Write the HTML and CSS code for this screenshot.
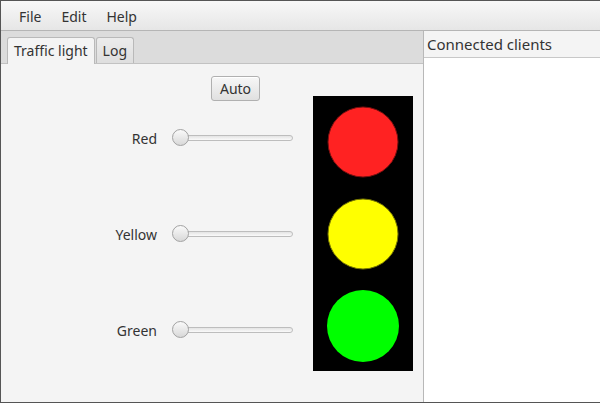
FILE: index.html
```html
<!DOCTYPE html>
<html>
<head>
<meta charset="utf-8">
<link rel="stylesheet" href="styles.css">
</head>
<body>
<div class="window">
  <div class="menubar">
    <span class="menu-item">File</span>
    <span class="menu-item">Edit</span>
    <span class="menu-item">Help</span>
  </div>
  <div class="main">
    <div class="left-pane">
      <div class="tab-header">
        <div class="tab selected">Traffic light</div>
        <div class="tab">Log</div>
      </div>
      <div class="tab-content">
        <div class="controls">
          <div class="auto-row"><button class="btn">Auto</button></div>
          <div class="slider-row">
            <span class="slider-label">Red</span>
            <div class="slider"><div class="track"></div><div class="thumb"></div></div>
          </div>
          <div class="slider-row">
            <span class="slider-label">Yellow</span>
            <div class="slider"><div class="track"></div><div class="thumb"></div></div>
          </div>
          <div class="slider-row">
            <span class="slider-label">Green</span>
            <div class="slider"><div class="track"></div><div class="thumb"></div></div>
          </div>
        </div>
        <svg class="light" width="100" height="275" viewBox="0 0 100 275">
          <rect x="0" y="0" width="100" height="275" fill="#000"/>
          <circle cx="50" cy="46" r="35" fill="#ff2222" stroke="#7a1010" stroke-width="1"/>
          <circle cx="50" cy="138" r="35" fill="#ffff00" stroke="#7a7a00" stroke-width="1"/>
          <circle cx="50" cy="230" r="36" fill="#00ff00"/>
        </svg>
      </div>
    </div>
    <div class="right-pane">
      <div class="right-header">Connected clients</div>
      <div class="client-list"></div>
    </div>
  </div>
</div>
</body>
</html>
```

FILE: styles.css
```css
html, body {
  margin: 0;
  padding: 0;
}
body {
  font-family: "Noto Sans", "DejaVu Sans", sans-serif;
  font-size: 14px;
  color: #333;
  background: #f4f4f4;
}
.window {
  width: 600px;
  height: 403px;
  box-sizing: border-box;
  border-top: 1px solid #555;
  border-left: 1px solid #555;
  border-bottom: 1px solid #555;
  display: flex;
  flex-direction: column;
  overflow: hidden;
  background: #f4f4f4;
}
.menubar {
  height: 30px;
  flex: none;
  box-sizing: border-box;
  padding-top: 2px;
  border-bottom: 1px solid #b5b5b5;
  background: linear-gradient(#f8f8f8, #e6e6e6);
  display: flex;
  align-items: center;
  padding-left: 8px;
}
.menu-item {
  padding: 0 10px;
  line-height: 20px;
}
.main {
  flex: 1;
  display: flex;
  min-height: 0;
}
.left-pane {
  width: 422px;
  flex: none;
  display: flex;
  flex-direction: column;
  border-right: 1px solid #b8b8b8;
}
.tab-header {
  height: 33px;
  flex: none;
  box-sizing: border-box;
  background: #dcdcdc;
  border-bottom: 1px solid #c2c2c2;
  display: flex;
  align-items: flex-end;
  padding-left: 6px;
  gap: 1px;
}
.tab {
  height: 26px;
  box-sizing: border-box;
  border: 1px solid #b9b9b9;
  border-bottom: none;
  border-radius: 3px 3px 0 0;
  padding: 0 6px;
  line-height: 26px;
  background: linear-gradient(#ececec, #dedede);
}
.tab.selected {
  background: #f4f4f4;
  height: 27px;
  margin-bottom: -1px;
}
.tab-content {
  flex: 1;
  display: flex;
  padding-top: 12px;
  background: #f4f4f4;
}
.controls {
  width: 312px;
  flex: none;
  display: flex;
  flex-direction: column;
}
.auto-row {
  padding-left: 210px;
}
.btn {
  width: 49px;
  height: 25px;
  font: inherit;
  color: #333;
  border: 1px solid #b0b0b0;
  border-radius: 3px;
  background: linear-gradient(#f7f7f7, #e0e0e0);
  padding: 0;
  box-shadow: inset 0 1px 0 #fff;
}
.slider-row {
  display: flex;
  align-items: center;
  height: 24px;
  margin-top: 72px;
}
.auto-row + .slider-row {
  margin-top: 25px;
}
.slider-label {
  width: 156px;
  text-align: right;
}
.slider {
  position: relative;
  margin-left: 15px;
  width: 121px;
  height: 18px;
}
.track {
  position: absolute;
  left: 2px;
  right: 0;
  top: 6px;
  height: 6px;
  box-sizing: border-box;
  border: 1px solid #bdbdbd;
  border-radius: 3px;
  background: linear-gradient(#e4e4e4, #fafafa);
}
.thumb {
  position: absolute;
  left: 0;
  top: 0;
  width: 17px;
  height: 17px;
  box-sizing: border-box;
  border-radius: 50%;
  border: 1px solid #a2a2a2;
  background: linear-gradient(#fafafa, #d8d8d8);
}
.light {
  display: block;
  margin-top: 20px;
  flex: none;
}
.right-pane {
  flex: 1;
  display: flex;
  flex-direction: column;
}
.right-header {
  height: 26px;
  flex: none;
  border-bottom: 1px solid #c8c8c8;
  background: #f4f4f4;
  padding-left: 3px;
  line-height: 26px;
  font-size: 15px;
}
.client-list {
  flex: 1;
  background: #fff;
}
```
